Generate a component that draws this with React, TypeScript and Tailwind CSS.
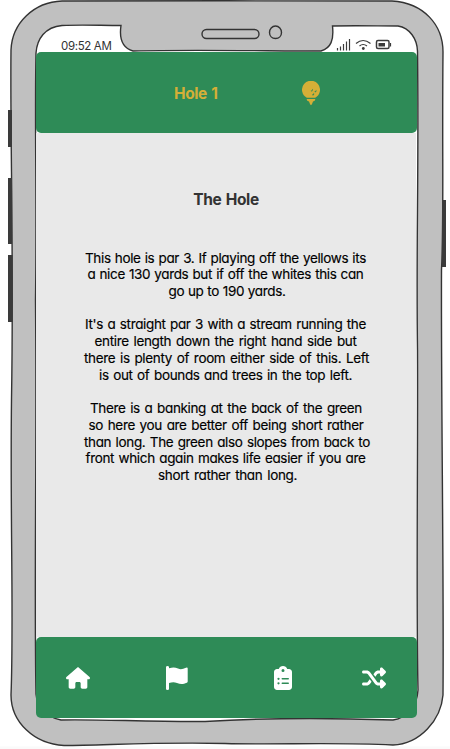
import { FaHouse, FaClipboardList, FaShuffle } from "react-icons/fa6";

const paragraphs = [
  [
    ["This hole is par 3. If playing off the yellows its", "w-[281px]"],
    ["a nice 130 yards but if off the whites this can", "w-[276px]"],
    ["go up to 190 yards.", "w-[117px] ml-[3px]"],
  ],
  [
    ["It's a straight par 3 with a stream running the", "w-[281px]"],
    ["entire length down the right hand side but", "w-[262px]"],
    ["there is plenty of room either side of this. Left", "w-[285px] ml-[2px]"],
    ["is out of bounds and trees in the top left.", "w-[253px]"],
  ],
  [
    ["There is a banking at the back of the green", "w-[272px] ml-[1px]"],
    ["so here you are better off being short rather", "w-[275px] ml-[1px]"],
    ["than long. The green also slopes from back to", "w-[286px] ml-[3px]"],
    ["front which again makes life easier if you are", "w-[280px]"],
    ["short rather than long.", "w-[139px] ml-[4px]"],
  ],
];

function PhoneFrame() {
  return (
    <svg className="absolute inset-0" width="450" height="749" viewBox="0 0 450 749" fill="none" stroke="#333" strokeWidth="1.4">
      <path d="M0 748.5H450" stroke="#fafafa" strokeWidth="4" />
      <path
        d="M62 1C120 0 340 1.500 392 1C424 3 443 25 443 52C442 150 444 220 441.500 270C441 400 444 580 443 695C441 720 420 744 393 745C330 742 280 745 225 743.500C160 742 110 745 64 745.500C34 744 11 722 11 695C14 620 10 520 11.500 400C14 250 10 140 11 50C12 23 34 2 62 1Z"
        fill="#c0c0c0"
      />
      <path
        d="M62 25.500C82 24.500 100 25.500 121 25.500C119 39 123 48 133 51C190 49.500 270 51 321 51C331 48 334 40 332.500 26C355 25.500 378 26 398 26C410 28 417 39 417.500 51C419 180 416 240 417.500 350C418 460 416 600 418 690C417 707 407 718 393 720C310 717 245 719 205 721.500C150 722 95 719 61 720C46 717 37 707 36 694C34 590 37 450 35.500 300C37 200 34.500 120 36 53C37 39 45 27 62 25.500Z"
        fill="#fff"
      />
      <rect x="202" y="29.500" width="57" height="9" rx="4.500" />
      <path d="M275.500 26C279 26 281.500 29 281.500 32.500S279 38.500 275.500 38.500S269.500 36 269.500 32.500S272 26 275.500 26Z" />
      <g stroke="none" fill="#3a3a3a">
        <rect x="8" y="110" width="4" height="37" />
        <rect x="8" y="178" width="4" height="66" />
        <rect x="8" y="255" width="4.500" height="67" />
        <rect x="442" y="200" width="4" height="67" />
      </g>
    </svg>
  );
}

function StatusIcons() {
  return (
    <svg className="mt-[2px]" width="56" height="14" viewBox="0 0 56 14" fill="none" stroke="#3a3a3a" strokeWidth="1.200">
      <path d="M1.500 10V12.500M4.500 8.500V12.500M7.500 6V12.500M10.500 3.500V12.500M13.500 1V12.500" />
      <path d="M20 5.500Q27 -.5 34.500 5.500M23.500 8Q27 5 31 8" />
      <circle cx="27.300" cy="10.500" r="1.400" fill="#3a3a3a" stroke="none" />
      <rect x="40.500" y="2.500" width="12.500" height="8" rx="1.500" strokeWidth="1.500" />
      <rect x="42.500" y="5" width="6.500" height="3.500" fill="#3a3a3a" stroke="none" />
      <path d="M54.500 5V8.500" />
    </svg>
  );
}

function GolfBallIcon() {
  return (
    <svg className="ml-[83px]" width="18" height="24" viewBox="0 0 18 24" fill="currentColor">
      <path d="M4.800 16.700A9 9 0 1 1 13.200 16.700Z" />
      <path d="M4.600 18H13.400Q13.200 20 11 20.500L10 23Q9.700 24 9 24T8 23L7 20.500Q4.800 20 4.600 18Z" />
      <g fill="#2e8b57">
        <path d="M10.300 7.800Q11.700 8.700 10.200 10.300Q8.800 10.800 8.700 9.700Q10.300 9.800 10.300 7.800Z" />
        <path d="M14 8.800Q15.300 9.900 13.800 11.200Q12.500 11.500 12.300 10.500Q13.900 10.800 14 8.800Z" />
        <path d="M11.700 11.700Q13 12.800 11.600 14.300Q10.200 14.700 10 13.500Q11.700 13.700 11.700 11.700Z" />
      </g>
    </svg>
  );
}

function FlagIcon() {
  return (
    <svg className="ml-[1px]" width="22" height="24" viewBox="0 0 22 24" fill="currentColor">
      <path d="M0 1.200A1.500 1.200 0 0 1 3 1.200V2.300C7 1.300 9 1.400 12 2.600C15 3.800 17 3 20 1.800Q21.700 1.200 21.700 2.500V15.500Q21.700 16.400 20.800 16.700C17 18.300 14.500 18.300 11 17C8 16 6 16.300 3 17V23Q3 24 1.500 24T0 23Z" />
    </svg>
  );
}

export default function App() {
  return (
    <div className="relative h-[749px] w-[450px] overflow-hidden bg-white font-['Inter','Noto_Sans',sans-serif] [font-feature-settings:'cv11','ss03']">
      <PhoneFrame />
      <div className="relative ml-9 flex h-[718px] w-[381px] flex-col pt-9">
        <div className="flex h-4 shrink-0 items-start justify-between pl-[25px] pr-[25px] text-[#333]">
          <span className="w-[51px] whitespace-nowrap text-[11.500px] leading-[20px] tracking-[-0.35px]">09:52 AM</span>
          <StatusIcons />
        </div>
        <header className="flex h-[81px] shrink-0 items-center rounded-[5px] bg-[#2e8b57] pl-[138px] text-[#d4af37]">
          <h1 className="w-[45px] whitespace-nowrap pt-[2px] text-[15.500px] font-bold leading-5 tracking-[-0.4px] [word-spacing:1px]">Hole 1</h1>
          <GolfBallIcon />
        </header>
        <main className="mr-px flex flex-1 flex-col items-center bg-[#e9e9e9] pt-[57px] text-black">
          <h2 className="whitespace-nowrap text-[15.500px] font-bold leading-5 tracking-[-0.35px] text-[#333] [word-spacing:1px]">The Hole</h2>
          <div className="mt-[39.500px] flex flex-col items-center gap-[16.500px] pr-[1px]">
            {paragraphs.map((lines, i) => (
              <div key={i} className="flex flex-col items-center text-[13.500px] leading-[16.800px] tracking-[-0.35px]">
                {lines.map(([text, width]) => (
                  <p key={text} className={`${width} whitespace-nowrap [-webkit-text-stroke:0.15px_black] [text-align-last:justify]`}>{text}</p>
                ))}
              </div>
            ))}
          </div>
        </main>
        <nav className="flex h-[81px] shrink-0 items-center rounded-[5px] bg-[#2e8b57] pl-[30px] text-white">
          <FaHouse className="mr-[75px] h-[22px] w-6" />
          <FlagIcon />
          <FaClipboardList className="ml-[86px] h-6 w-[18px]" />
          <FaShuffle className="ml-[70px] h-6 w-6" />
        </nav>
      </div>
    </div>
  );
}
